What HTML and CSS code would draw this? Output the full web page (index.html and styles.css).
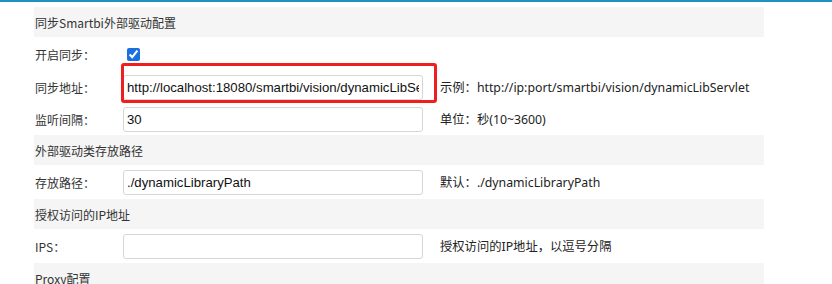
FILE: index.html
```html
<!doctype html>
<html lang=zh-CN>
<head>
<meta charset=utf-8>
<title>外部驱动配置</title>
<link rel="stylesheet" href="styles.css">
</head>
<body>

<div class="topbar"></div>

<div class="panel">

	<!-- sync -->
	<div class="section-title">同步Smartbi外部驱动配置</div>

	<div class="row first">
		<span class="label">开启同步：</span>
		<div class="field"><input type="checkbox" class="check" checked></div>
	</div>

	<div class="row tight">
		<span class="label">同步地址：</span>
		<div class="field marked">
			<input type="text" class="text" value="http://localhost:18080/smartbi/vision/dynamicLibServlet">
			<span class="highlight"></span>
		</div>
		<span class="tip">示例：http://ip:port/smartbi/vision/dynamicLibServlet</span>
	</div>

	<div class="row tight">
		<span class="label">监听间隔：</span>
		<div class="field"><input type="text" class="text" value="30"></div>
		<span class="tip">单位：秒(10~3600)</span>
	</div>

	<!-- path -->
	<div class="section-title">外部驱动类存放路径</div>

	<div class="row">
		<span class="label">存放路径：</span>
		<div class="field"><input type="text" class="text" value="./dynamicLibraryPath"></div>
		<span class="tip">默认：./dynamicLibraryPath</span>
	</div>

	<!-- ip -->
	<div class="section-title">授权访问的IP地址</div>

	<div class="row">
		<span class="label">IPS：</span>
		<div class="field"><input type="text" class="text" value=""></div>
		<span class="tip">授权访问的IP地址，以逗号分隔</span>
	</div>

	<!-- proxy -->
	<div class="section-title">Proxy配置</div>

</div>

</body>
</html>
```

FILE: styles.css
```css
/* ====  Base  ==== */

* {
	box-sizing: border-box;
}

html, body {
	margin:     0;
	background: white;
}

body {
	font-family: "Noto Sans", "Noto Sans CJK SC", sans-serif;
	font-size:   12px;
	color:       #333;
}

.topbar {
	height:     2px;
	background: #2290c1;
}

.panel {
	width:       730px;
	margin-left: 34px;
	padding-top: 5px;
}


/* ====  Sections and rows  ==== */

.section-title {
	display:      flex;
	align-items:  center;
	height:       30px;
	padding-left: 1px;
	background:   #f5f5f5;
	font-family:  "Noto Sans CJK SC", sans-serif;
}

.row {
	display:     flex;
	align-items: center;
	height:      34px;
}

.row.tight {
	height: 32px;
}

.label {
	width:        89px;
	padding-left: 1px;
	font-family:  "Noto Sans CJK SC", sans-serif;
}

.field {
	position: relative;
	display:  flex;
	width:    300px;
}

.tip {
	margin-left: 17px;
	font-family: "Noto Sans", "Noto Sans CJK SC", sans-serif;
	font-size:   12.3px;
	color:       #222;
}


/* ====  Inputs  ==== */

input.text {
	width:         300px;
	height:        25px;
	margin:        0;
	padding:       0 3px;
	border:        1px solid #d6d6d6;
	border-radius: 3px;
	outline:       0;
	font-family:   "Liberation Sans", Arial, sans-serif;
	font-size:     13.2px;
	color:         #111;
	background:    white;
}

input.check {
	width:        13px;
	height:       13px;
	margin:       0 0 0 4px;
	accent-color: #1b70e0;
}

/* red annotation frame round the address field */
.highlight {
	position:      absolute;
	left:          -2px;
	top:           -12px;
	width:         316px;
	height:        40px;
	border:        3px solid #ee1f1f;
	border-radius: 3px;
	pointer-events: none;
}
```
